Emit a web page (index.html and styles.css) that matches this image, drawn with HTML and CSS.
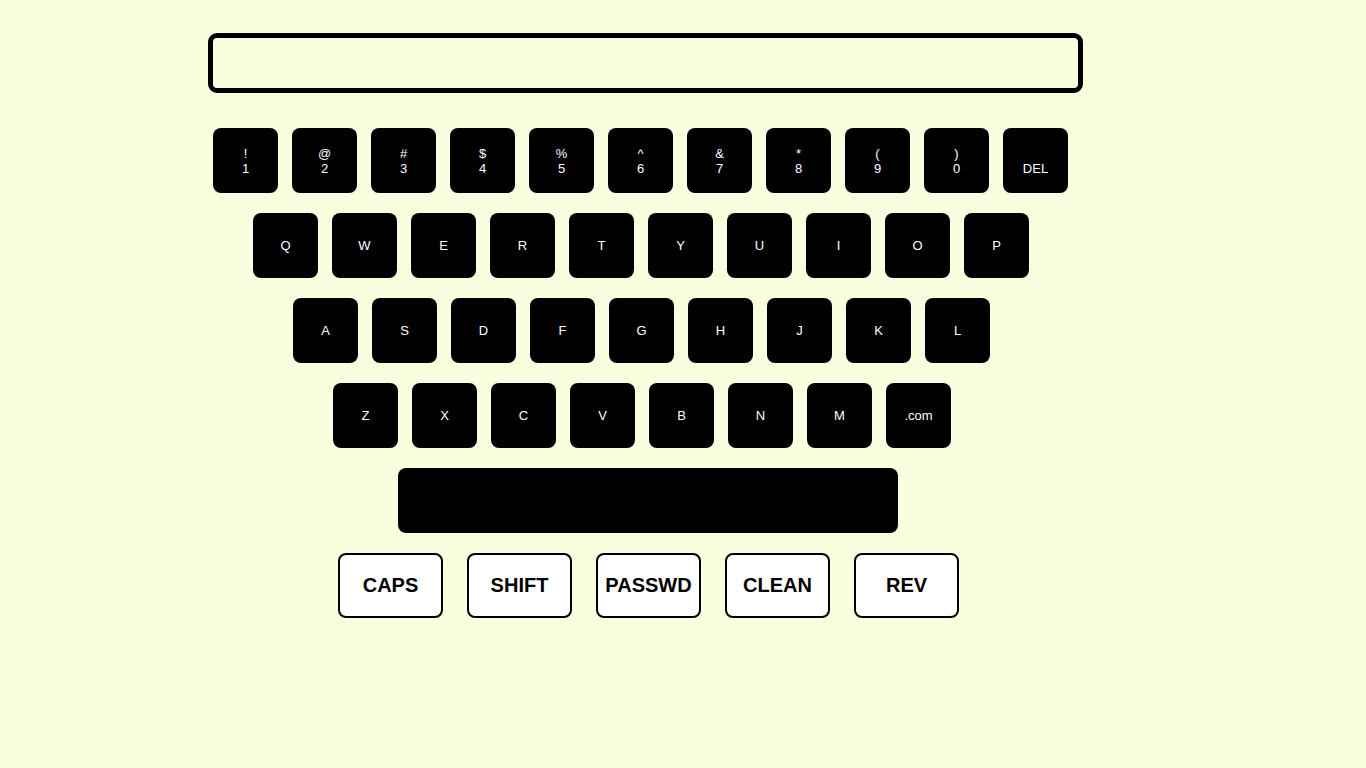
FILE: index.html
```html
<!DOCTYPE html>
<html>
<head>
<meta charset="utf-8">
<link rel="stylesheet" href="styles.css">
</head>
<body>
<div class="page">
  <div class="display"></div>
  <div class="keyboard">
    <div class="row row-num">
      <div class="key"><span>!</span><span>1</span></div>
      <div class="key"><span>@</span><span>2</span></div>
      <div class="key"><span>#</span><span>3</span></div>
      <div class="key"><span>$</span><span>4</span></div>
      <div class="key"><span>%</span><span>5</span></div>
      <div class="key"><span>^</span><span>6</span></div>
      <div class="key"><span>&amp;</span><span>7</span></div>
      <div class="key"><span>*</span><span>8</span></div>
      <div class="key"><span>(</span><span>9</span></div>
      <div class="key"><span>)</span><span>0</span></div>
      <div class="key"><span>&nbsp;</span><span>DEL</span></div>
    </div>
    <div class="row row-q">
      <div class="key">Q</div><div class="key">W</div><div class="key">E</div><div class="key">R</div><div class="key">T</div><div class="key">Y</div><div class="key">U</div><div class="key">I</div><div class="key">O</div><div class="key">P</div>
    </div>
    <div class="row row-a">
      <div class="key">A</div><div class="key">S</div><div class="key">D</div><div class="key">F</div><div class="key">G</div><div class="key">H</div><div class="key">J</div><div class="key">K</div><div class="key">L</div>
    </div>
    <div class="row row-z">
      <div class="key">Z</div><div class="key">X</div><div class="key">C</div><div class="key">V</div><div class="key">B</div><div class="key">N</div><div class="key">M</div><div class="key">.com</div>
    </div>
    <div class="row row-space">
      <div class="key space"></div>
    </div>
    <div class="row row-ctrl">
      <div class="ctrl">CAPS</div>
      <div class="ctrl">SHIFT</div>
      <div class="ctrl">PASSWD</div>
      <div class="ctrl">CLEAN</div>
      <div class="ctrl">REV</div>
    </div>
  </div>
</div>
</body>
</html>
```
FILE: styles.css
```css
html, body {
  margin: 0;
  padding: 0;
  background: #fafedf;
  font-family: "Liberation Sans", Arial, sans-serif;
}
.page {
  padding-top: 33px;
  height: 735px;
}
.display {
  box-sizing: border-box;
  margin-left: 208px;
  width: 875px;
  height: 60px;
  border: 5px solid #000;
  border-radius: 9px;
}
.keyboard {
  margin-top: 35px;
  margin-left: 213px;
  display: flex;
  flex-direction: column;
  gap: 20px;
}
.row {
  display: flex;
  gap: 14px;
}
.row-q { padding-left: 40px; }
.row-a { padding-left: 80px; }
.row-z { padding-left: 120px; }
.row-space { padding-left: 185px; }
.row-ctrl { padding-left: 125px; gap: 24px; }
.key {
  width: 65px;
  height: 65px;
  background: #000;
  color: #fff;
  border-radius: 8px;
  display: flex;
  flex-direction: column;
  align-items: center;
  justify-content: center;
  font-size: 13px;
  line-height: 15px;
}
.key.space {
  width: 500px;
}
.ctrl {
  box-sizing: border-box;
  width: 105px;
  height: 65px;
  background: #fff;
  border: 2px solid #000;
  border-radius: 8px;
  display: flex;
  align-items: center;
  justify-content: center;
  font-size: 20px;
  font-weight: bold;
  color: #000;
}
```
